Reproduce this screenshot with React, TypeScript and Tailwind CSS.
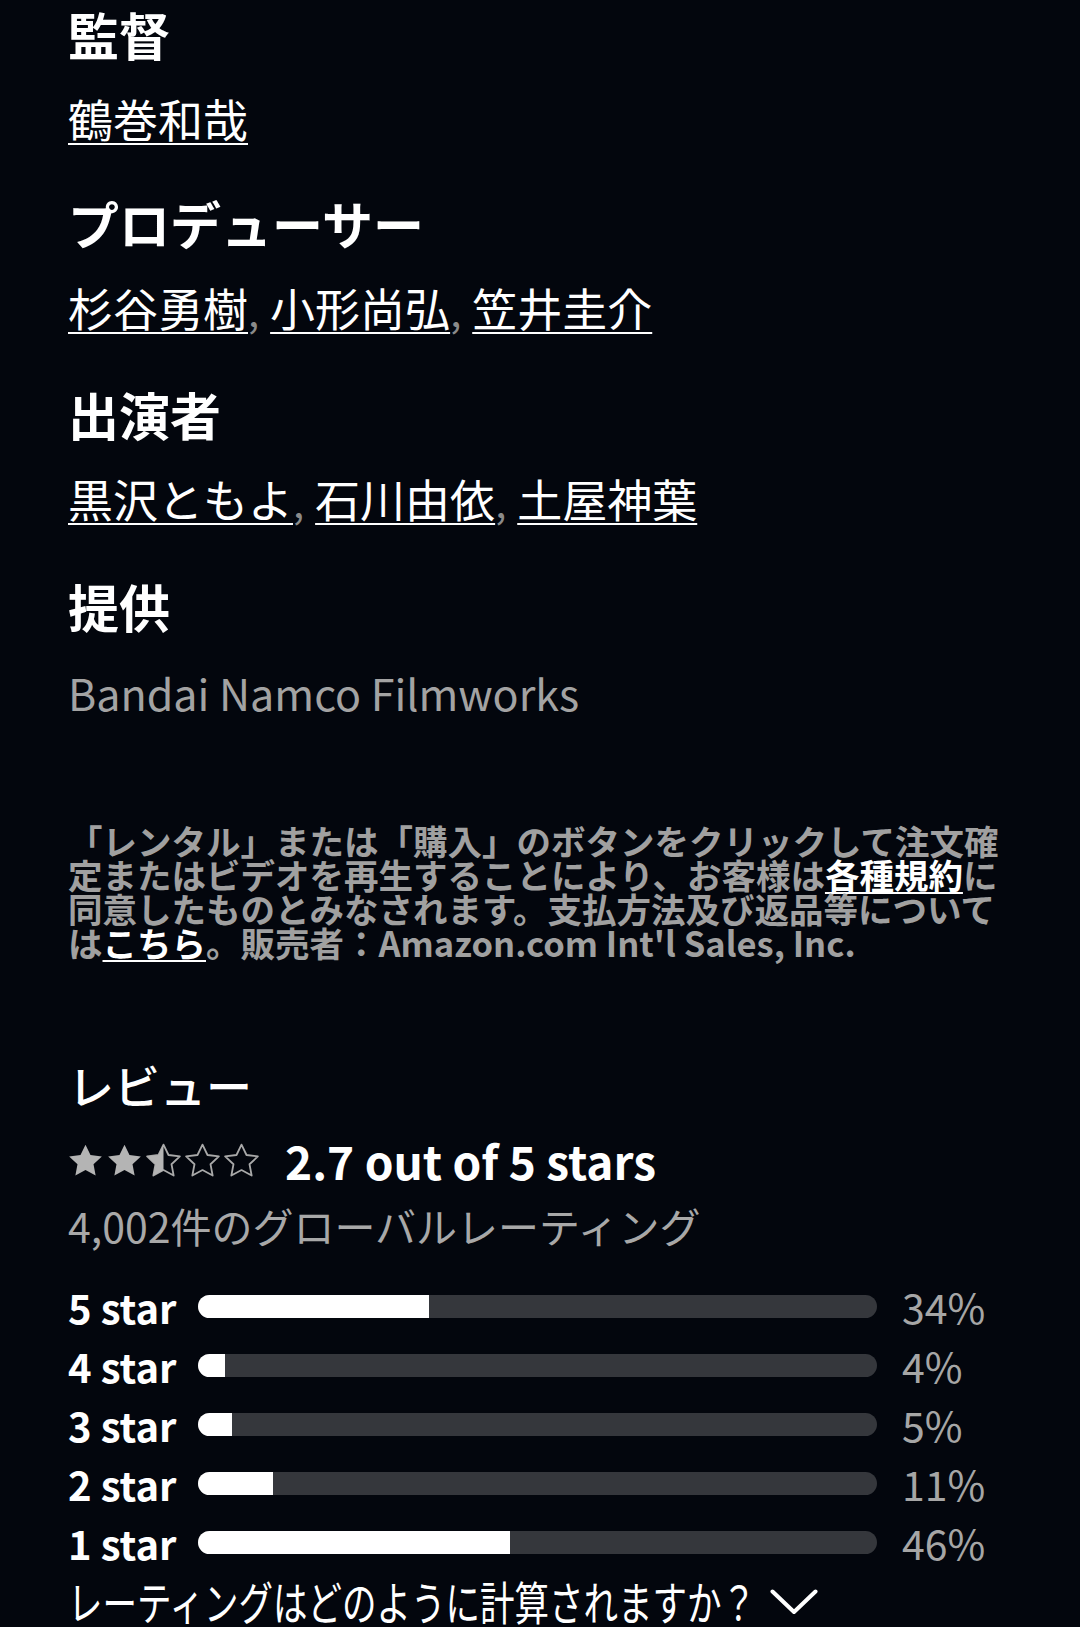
import React from 'react'

const STAR = 'M12 1.8l3.05 6.35 6.95.85-5.1 4.8 1.3 6.9L12 17.35 5.8 20.7l1.3-6.9L2 9l6.95-.85z'

type Credit = { title: string; names: string[] }

const credits: Credit[] = [
    { title: '監督', names: ['鶴巻和哉'] },
    { title: 'プロデューサー', names: ['杉谷勇樹', '小形尚弘', '笠井圭介'] },
    { title: '出演者', names: ['黒沢ともよ', '石川由依', '土屋神葉'] },
]

const breakdown = [
    { label: '5 star', pct: 34 },
    { label: '4 star', pct: 4 },
    { label: '3 star', pct: 5 },
    { label: '2 star', pct: 11 },
    { label: '1 star', pct: 46 },
]

function Star({ fill }: { fill: 'full' | 'half' | 'none' }) {
    return (
        <svg viewBox="1.3 1 21.4 20.4" className="w-[35px] h-[34px]">
            <defs>
                <clipPath id="half-left">
                    <rect x="0" y="0" width="12" height="23" />
                </clipPath>
            </defs>
            {fill === 'full' ? (
                <path d={STAR} fill="#b4b4b4" />
            ) : (
                <>
                    <path d={STAR} fill="none" stroke="#a9a9a9" strokeWidth="1.1" strokeLinejoin="round" />
                    {fill === 'half' && <path d={STAR} fill="#b4b4b4" clipPath="url(#half-left)" />}
                </>
            )}
        </svg>
    )
}

export default function App() {
    return (
        <div className="min-h-screen bg-[#03060d] text-white font-['Noto_Sans_CJK_JP',sans-serif]">
            <div className="px-[68px] pt-[4px]">
                {/* Credits */}
                {credits.map((c, i) => (
                    <section key={c.title} className={i > 0 ? 'mt-[46px]' : ''}>
                        <h2 className="text-[51px] leading-[60px] font-bold">{c.title}</h2>
                        <p className="mt-[27px] text-[45px] leading-[56px] whitespace-nowrap">
                            {c.names.map((n, j) => (
                                <React.Fragment key={n}>
                                    <a className="underline decoration-2 underline-offset-[5px]">{n}</a>
                                    {j < c.names.length - 1 && <span className="text-[#8a8a8a] text-[40px] pr-[2px]">, </span>}
                                </React.Fragment>
                            ))}
                        </p>
                    </section>
                ))}

                <section className="mt-[47px]">
                    <h2 className="text-[51px] leading-[60px] font-bold">提供</h2>
                    <p className="mt-[28px] text-[43px] leading-[56px] text-[#a3a3a3]">Bandai Namco Filmworks</p>
                </section>

                {/* Legal */}
                <p className="mt-[103px] text-[34.5px] leading-[34px] font-semibold text-[#a0a0a0]">
                    「レンタル」または「購入」のボタンをクリックして注文確定またはビデオを再生することにより、お客様は
                    <a className="text-white font-bold underline decoration-2 underline-offset-[3px]">各種規約</a>
                    に同意したものとみなされます。支払方法及び返品等については
                    <a className="text-white font-bold underline decoration-2 underline-offset-[3px]">こちら</a>
                    。販売者：Amazon.com Int'l Sales, Inc.
                </p>

                {/* Reviews */}
                <h2 className="mt-[97px] text-[46px] leading-[56px] font-medium">レビュー</h2>
                <div className="mt-[23px] h-[50px] flex items-center">
                    <div className="flex gap-[4px]">
                        <Star fill="full" />
                        <Star fill="full" />
                        <Star fill="half" />
                        <Star fill="none" />
                        <Star fill="none" />
                    </div>
                    <span className="ml-[26px] text-[46px] leading-none font-bold">2.7 out of 5 stars</span>
                </div>
                <p className="mt-[15px] text-[41px] leading-[50px] text-[#a8a8a8]">4,002件のグローバルレーティング</p>

                <div className="mt-[27px]">
                    {breakdown.map(b => (
                        <div key={b.label} className="h-[59px] flex items-center">
                            <span className="w-[130px] text-[40px] leading-none font-bold">{b.label}</span>
                            <div className="flex-1 h-[23px] rounded-full bg-[#35373c] overflow-hidden">
                                <div className="h-full bg-white" style={{ width: `${b.pct}%` }} />
                            </div>
                            <span className="w-[135px] pl-[25px] text-[41px] leading-none text-[#a6a6a6]">{b.pct}%</span>
                        </div>
                    ))}
                </div>

                <div className="mt-[10px] h-[40px] flex items-center">
                    <span className="w-[684px] whitespace-nowrap">
                        <span className="inline-block origin-left scale-x-[0.75] text-[46px] leading-[40px]">
                            レーティングはどのように計算されますか？
                        </span>
                    </span>
                    <svg viewBox="0 0 48 26" className="ml-[18px] w-[48px] h-[26px]">
                        <polyline points="2.5,2.5 24,23 45.5,2.5" fill="none" stroke="white" strokeWidth="4" strokeLinecap="round" strokeLinejoin="round" />
                    </svg>
                </div>
            </div>
        </div>
    )
}
